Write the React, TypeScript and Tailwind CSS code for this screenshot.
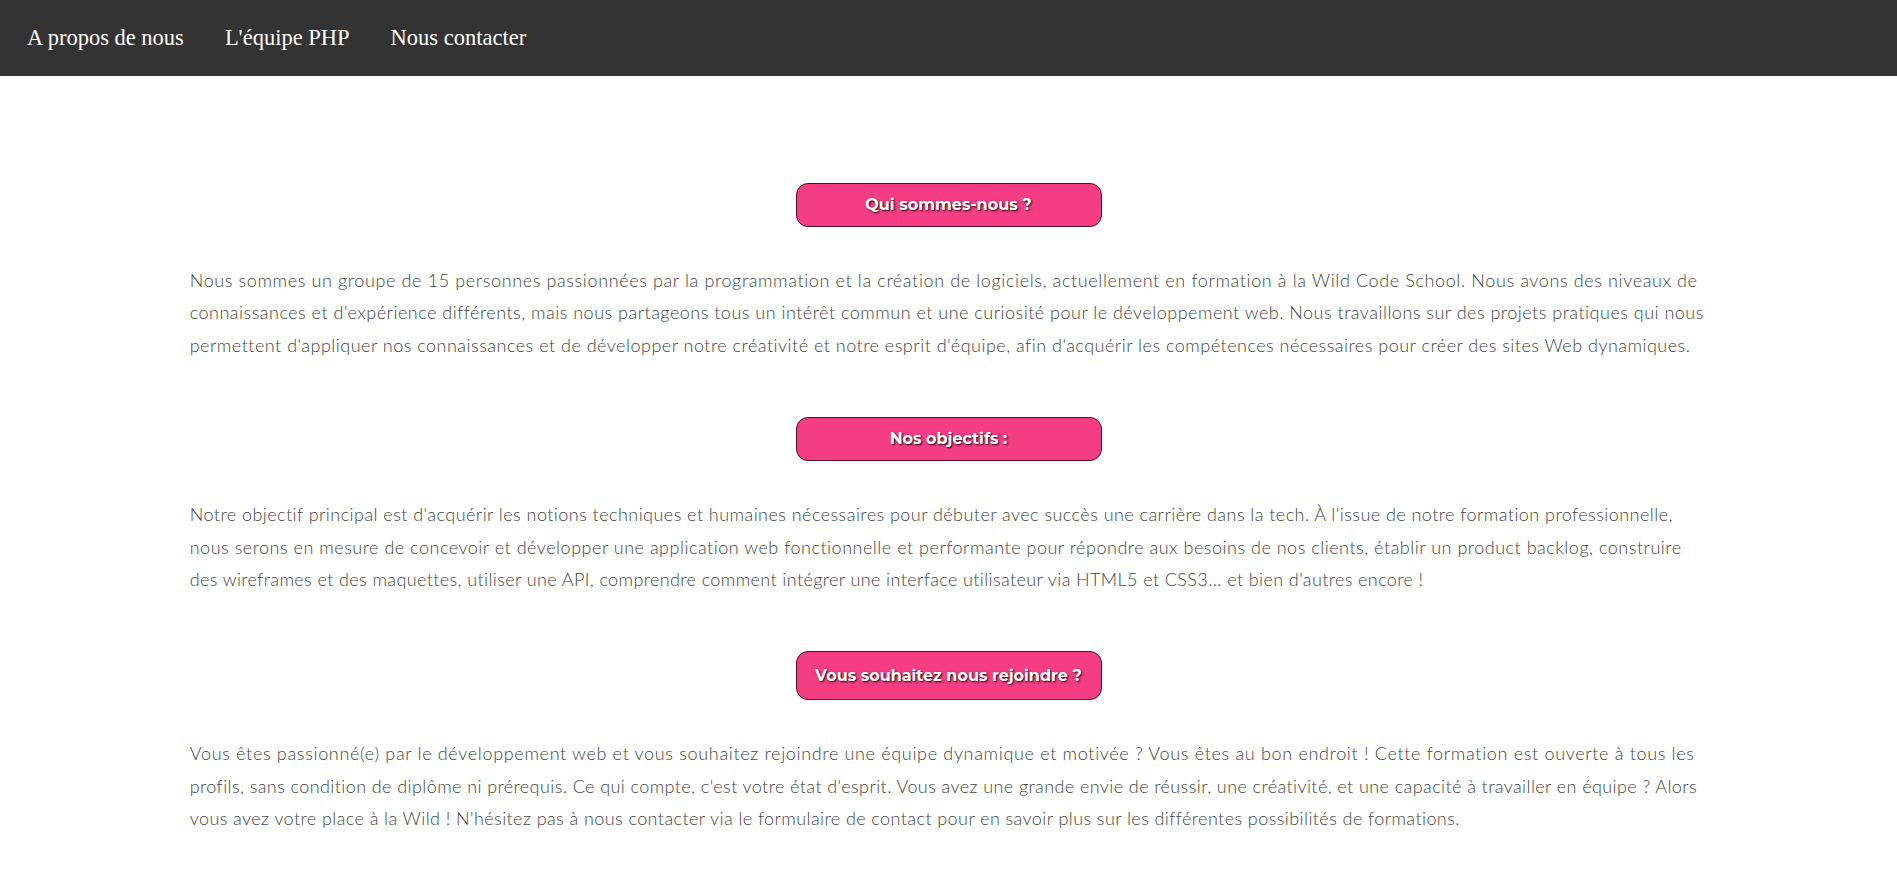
import React from "react";

const navLinks = ["A propos de nous", "L'équipe PHP", "Nous contacter"];

// each line keeps the reference's wrapping; tracking evens out the font swap
const sections = [
  {
    title: "Qui sommes-nous ?",
    tall: false,
    lines: [
      {
        text: "Nous sommes un groupe de 15 personnes passionnées par la programmation et la création de logiciels, actuellement en formation à la Wild Code School. Nous avons des niveaux de",
        tracking: "tracking-[0.62px]",
      },
      {
        text: "connaissances et d'expérience différents, mais nous partageons tous un intérêt commun et une curiosité pour le développement web. Nous travaillons sur des projets pratiques qui nous",
        tracking: "tracking-[0.49px]",
      },
      {
        text: "permettent d'appliquer nos connaissances et de développer notre créativité et notre esprit d'équipe, afin d'acquérir les compétences nécessaires pour créer des sites Web dynamiques.",
        tracking: "tracking-[0.49px]",
      },
    ],
  },
  {
    title: "Nos objectifs :",
    tall: false,
    lines: [
      {
        text: "Notre objectif principal est d'acquérir les notions techniques et humaines nécessaires pour débuter avec succès une carrière dans la tech. À l'issue de notre formation professionnelle,",
        tracking: "tracking-[0.45px]",
      },
      {
        text: "nous serons en mesure de concevoir et développer une application web fonctionnelle et performante pour répondre aux besoins de nos clients, établir un product backlog, construire",
        tracking: "tracking-[0.51px]",
      },
      {
        text: "des wireframes et des maquettes, utiliser une API, comprendre comment intégrer une interface utilisateur via HTML5 et CSS3... et bien d'autres encore !",
        tracking: "tracking-[0.39px]",
      },
    ],
  },
  {
    title: "Vous souhaitez nous rejoindre ?",
    tall: true,
    lines: [
      {
        text: "Vous êtes passionné(e) par le développement web et vous souhaitez rejoindre une équipe dynamique et motivée ? Vous êtes au bon endroit ! Cette formation est ouverte à tous les",
        tracking: "tracking-[0.67px]",
      },
      {
        text: "profils, sans condition de diplôme ni prérequis. Ce qui compte, c'est votre état d'esprit. Vous avez une grande envie de réussir, une créativité, et une capacité à travailler en équipe ? Alors",
        tracking: "tracking-[0.41px]",
      },
      {
        text: "vous avez votre place à la Wild ! N'hésitez pas à nous contacter via le formulaire de contact pour en savoir plus sur les différentes possibilités de formations.",
        tracking: "tracking-[0.42px]",
      },
    ],
  },
];

export default function App() {
  return (
    <div className="min-h-screen bg-white">
      {/* Navbar */}
      <nav className="flex h-[76px] items-center gap-[41px] bg-[#333333] pl-[27px] font-['Liberation_Serif',serif] text-[22.5px] text-white">
        {navLinks.map((link) => (
          <a key={link} href="#" className="leading-none">
            {link}
          </a>
        ))}
      </nav>

      <main className="mx-auto w-[80%] pt-[107px] font-['Lato',sans-serif] text-[18px] font-light leading-[32.4px] text-[#444444]">
        {sections.map((section, i) => (
          <section key={section.title} className={i > 0 ? "mt-[56px]" : ""}>
            <div className="flex justify-center">
              <h2
                className={`flex w-[306px] items-center justify-center rounded-[12px] border border-[#4d0f2c] bg-[#f53d84] font-['Montserrat','Open_Sans',sans-serif] text-[16px] font-bold tracking-normal text-white [text-shadow:1px_1px_2px_#1a0510] ${
                  section.tall ? "h-[49px]" : "h-[44px]"
                }`}
              >
                {section.title}
              </h2>
            </div>
            <p className="mt-[37px]">
              {section.lines.map((line) => (
                <span
                  key={line.text}
                  className={`block whitespace-nowrap ${line.tracking}`}
                >
                  {line.text}
                </span>
              ))}
            </p>
          </section>
        ))}
      </main>
    </div>
  );
}
